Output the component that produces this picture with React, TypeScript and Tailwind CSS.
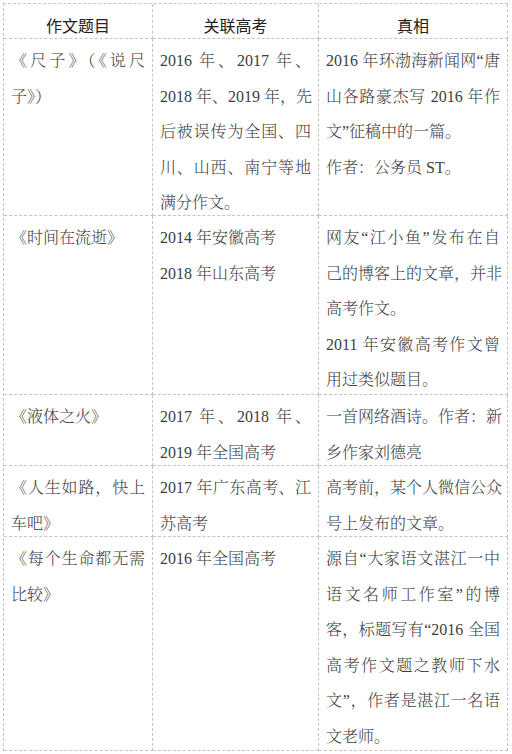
type Cell = string[][];

const rows: Cell[][] = [
  [
    [["《尺子》（《说尺", "子》）"]],
    [["2016 年、2017 年、", "2018 年、2019 年，先", "后被误传为全国、四", "川、山西、南宁等地", "满分作文。"]],
    [["2016 年环渤海新闻网“唐", "山各路豪杰写 2016 年作", "文”征稿中的一篇。"], ["作者：公务员 ST。"]],
  ],
  [
    [["《时间在流逝》"]],
    [["2014 年安徽高考"], ["2018 年山东高考"]],
    [["网友“江小鱼”发布在自", "己的博客上的文章，并非", "高考作文。"], ["2011 年安徽高考作文曾", "用过类似题目。"]],
  ],
  [
    [["《液体之火》"]],
    [["2017 年、2018 年、", "2019 年全国高考"]],
    [["一首网络酒诗。作者：新", "乡作家刘德亮"]],
  ],
  [
    [["《人生如路，快上", "车吧》"]],
    [["2017 年广东高考、江", "苏高考"]],
    [["高考前，某个人微信公众", "号上发布的文章。"]],
  ],
  [
    [["《每个生命都无需", "比较》"]],
    [["2016 年全国高考"]],
    [["源自“大家语文湛江一中", "语文名师工作室”的博", "客，标题写有“2016 全国", "高考作文题之教师下水", "文”，作者是湛江一名语", "文老师。"]],
  ],
];

const headers = ["作文题目", "关联高考", "真相"];

const serif = "font-['Liberation_Serif','Noto_Serif_CJK_SC','Noto_Sans_CJK_SC',serif]";

const BodyCell = ({ cell }: { cell: Cell }) => (
  <div className={`border-r border-b border-dashed border-[#c4c4c4] px-[7px] pt-[4px] text-[16px] font-light leading-[35.5px] text-[#404040] ${serif}`}>
    {cell.map((para, pi) =>
      para.map((line, li) => (
        <div
          key={`${pi}-${li}`}
          className={
            li < para.length - 1
              ? "whitespace-nowrap text-justify [text-align-last:justify]"
              : "whitespace-nowrap"
          }
        >
          {line}
        </div>
      ))
    )}
  </div>
);

export default function App() {
  return (
    <div className="w-[512px] h-[754px] bg-white pt-[3px] pl-[3px]">
      <div className="grid w-[505px] grid-cols-[149px_166px_189px] grid-rows-[35px_177px_179px_71px_71px_214px] border-l border-t border-dashed border-[#c4c4c4]">
        {headers.map(h => (
          <div
            key={h}
            className="border-r border-b border-dashed border-[#c4c4c4] pt-[7px] text-center text-[16px] leading-[28px] text-[#222] font-['Noto_Sans_CJK_SC',sans-serif]"
          >
            {h}
          </div>
        ))}
        {rows.map((row, ri) => row.map((cell, ci) => <BodyCell key={`${ri}-${ci}`} cell={cell} />))}
      </div>
    </div>
  );
}
